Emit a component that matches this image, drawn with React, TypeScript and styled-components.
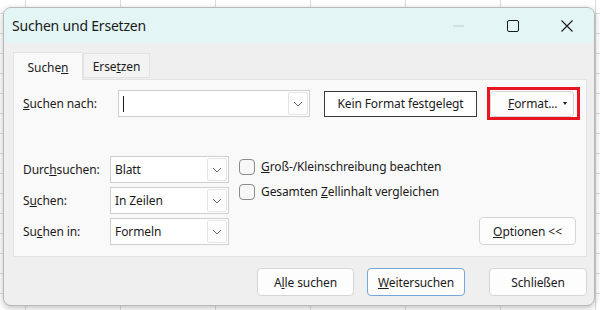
import styled, { createGlobalStyle } from 'styled-components';

const GlobalStyle = createGlobalStyle`
    html, body {
        margin: 0;
        padding: 0;
        width: 600px;
        height: 310px;
        overflow: hidden;
    }
    body {
        font-family: 'Noto Sans', 'Open Sans', sans-serif;
        color: #1b1b1b;
        background-color: #ffffff;
        background-image:
            linear-gradient(to right, #dcdcdc 1px, transparent 1px),
            linear-gradient(to bottom, #dcdcdc 1px, transparent 1px);
        background-size: 95px 100%, 100% 20px;
        background-position: 25px 0, 0 13px;
    }
`;

const Sheet = styled.div`
    width: 600px;
    height: 310px;
    padding: 7px 5px 4px 3px;
    box-sizing: border-box;
`;

const Dialog = styled.div`
    display: flex;
    flex-direction: column;
    width: 100%;
    height: 100%;
    box-sizing: border-box;
    background: #efefef;
    border: 1px solid #b9b9b9;
    border-radius: 8px;
    box-shadow: 0 2px 6px rgba(0, 0, 0, 0.25);
    overflow: hidden;
`;

const TitleBar = styled.div`
    display: flex;
    align-items: center;
    height: 35px;
    flex: none;
    background: #e3f6f5;
    padding-left: 8px;
`;

const Title = styled.div`
    flex: 1;
    font-size: 14px;
    letter-spacing: -0.2px;
    color: #1a1a1a;
`;

const WinButton = styled.div<{ $w: number }>`
    display: flex;
    align-items: center;
    justify-content: center;
    width: ${(p) => p.$w}px;
    height: 35px;
`;

const Body = styled.div`
    display: flex;
    flex-direction: column;
    flex: 1;
    padding: 9px 7px 0 9px;
    font-size: 12px;
    letter-spacing: -0.1px;
`;

const TabStrip = styled.div`
    display: flex;
    align-items: flex-end;
    height: 27px;
    position: relative;
    z-index: 1;
`;

const Tab = styled.div<{ $active?: boolean }>`
    display: flex;
    align-items: center;
    justify-content: center;
    box-sizing: border-box;
    width: ${(p) => (p.$active ? 70 : 67)}px;
    height: ${(p) => (p.$active ? 28 : 25)}px;
    margin-bottom: ${(p) => (p.$active ? -1 : 1)}px;
    background: ${(p) => (p.$active ? '#f9f9f9' : '#f3f3f3')};
    border: 1px solid #e3e3e3;
    border-bottom: ${(p) => (p.$active ? 'none' : '1px solid #e3e3e3')};
    padding-top: ${(p) => (p.$active ? 2 : 1)}px;
`;

const Panel = styled.div`
    display: flex;
    flex-direction: column;
    height: 178px;
    box-sizing: border-box;
    background: #f9f9f9;
    border: 1px solid #e3e3e3;
    padding: 10px 5px 0 9px;
`;

const TopRow = styled.div`
    display: flex;
    align-items: center;
    height: 27px;
`;

const Label = styled.div<{ $w: number }>`
    width: ${(p) => p.$w}px;
    flex: none;
`;

const Combo = styled.div<{ $w: number }>`
    display: flex;
    align-items: center;
    box-sizing: border-box;
    width: ${(p) => p.$w}px;
    height: 27px;
    background: #ffffff;
    border: 1px solid #cfcfcf;
    flex: none;
`;

const ComboText = styled.div`
    flex: 1;
    padding-left: 4px;
    display: flex;
    align-items: center;
`;

const Caret = styled.div`
    width: 1px;
    height: 16px;
    background: #1a1a1a;
`;

const ComboButton = styled.div`
    display: flex;
    align-items: center;
    justify-content: center;
    width: 20px;
    height: 23px;
    margin-right: 1px;
    box-sizing: border-box;
    border: 1px solid #e4e4e4;
    border-radius: 2px;
    background: #fdfdfd;
`;

const FormatBox = styled.div`
    display: flex;
    align-items: center;
    justify-content: center;
    box-sizing: border-box;
    width: 153px;
    height: 26px;
    margin-left: 14px;
    border: 1px solid #3a3a3a;
    background: #ffffff;
`;

const Highlight = styled.div`
    box-sizing: border-box;
    width: 93px;
    height: 33px;
    margin-left: 10px;
    border: 3px solid #e8141f;
    display: flex;
    align-items: center;
`;

const Button = styled.div<{ $w: number; $h?: number; $primary?: boolean }>`
    display: flex;
    align-items: center;
    justify-content: center;
    box-sizing: border-box;
    width: ${(p) => p.$w}px;
    height: ${(p) => p.$h ?? 28}px;
    flex: none;
    background: #fdfdfd;
    border: 1px solid ${(p) => (p.$primary ? '#72a9da' : '#d5d5d5')};
    border-radius: 4px;
    color: #1b1b1b;
`;

const SplitButton = styled(Button)`
    justify-content: space-between;
    padding: 0 6px 0 17px;
`;

const Arrow = styled.span`
    width: 0;
    height: 0;
    border-left: 2.5px solid transparent;
    border-right: 2.5px solid transparent;
    border-top: 3px solid #1a1a1a;
`;

const Options = styled.div`
    display: flex;
    margin-top: 39px;
`;

const SelectCol = styled.div`
    display: flex;
    flex-direction: column;
    gap: 4px;
`;

const SelectRow = styled.div`
    display: flex;
    align-items: center;
`;

const CheckCol = styled.div`
    display: flex;
    flex-direction: column;
    gap: 8px;
    margin-left: 10px;
    padding-top: 2px;
`;

const CheckRow = styled.div`
    display: flex;
    align-items: center;
    gap: 6px;
`;

const Box = styled.div`
    width: 16px;
    height: 16px;
    box-sizing: border-box;
    border: 1px solid #8a8a8a;
    border-radius: 4px;
    background: #f7f7f7;
`;

const RightCol = styled.div`
    flex: 1;
    display: flex;
    align-items: flex-end;
    justify-content: flex-end;
    padding-right: 5px;
`;

const Footer = styled.div`
    display: flex;
    justify-content: flex-end;
    gap: 13px;
    padding: 11px 0 0;
`;

const CloseButton = styled(Button)`
    margin-left: 11px;
`;

const Chevron = () => (
    <svg width="10" height="6" viewBox="0 0 10 6">
        <path d="M1 1 L5 5 L9 1" fill="none" stroke="#6a6a6a" strokeWidth="1" />
    </svg>
);

const selects = [
    { label: <>Durc<u>h</u>suchen:</>, value: 'Blatt' },
    { label: <>S<u>u</u>chen:</>, value: 'In Zeilen' },
    { label: <>Su<u>c</u>hen in:</>, value: 'Formeln' },
];

export default function App() {
    return (
        <Sheet>
            <GlobalStyle />
            <Dialog>
                <TitleBar>
                    <Title>Suchen und Ersetzen</Title>
                    <WinButton $w={54}>
                        <svg width="12" height="2" viewBox="0 0 12 2">
                            <path d="M0 1 H11" stroke="#c4c9c9" strokeWidth="1" />
                        </svg>
                    </WinButton>
                    <WinButton $w={54}>
                        <svg width="12" height="12" viewBox="0 0 12 12">
                            <rect x="0.5" y="0.5" width="11" height="11" rx="1.5" fill="none" stroke="#1a1a1a" strokeWidth="1" />
                        </svg>
                    </WinButton>
                    <WinButton $w={54}>
                        <svg width="12" height="12" viewBox="0 0 12 12">
                            <path d="M0.5 0.5 L11.5 11.5 M11.5 0.5 L0.5 11.5" stroke="#1a1a1a" strokeWidth="1.1" />
                        </svg>
                    </WinButton>
                </TitleBar>
                <Body>
                    <TabStrip>
                        <Tab $active><span>Suche<u>n</u></span></Tab>
                        <Tab><span>Erse<u>t</u>zen</span></Tab>
                    </TabStrip>
                    <Panel>
                        <TopRow>
                            <Label $w={95}><u>S</u>uchen nach:</Label>
                            <Combo $w={192}>
                                <ComboText><Caret /></ComboText>
                                <ComboButton><Chevron /></ComboButton>
                            </Combo>
                            <FormatBox>Kein Format festgelegt</FormatBox>
                            <Highlight>
                                <SplitButton $w={84} $h={26}>
                                    <span><u>F</u>ormat...</span>
                                    <Arrow />
                                </SplitButton>
                            </Highlight>
                        </TopRow>
                        <Options>
                            <SelectCol>
                                {selects.map((s, i) => (
                                    <SelectRow key={i}>
                                        <Label $w={87}>{s.label}</Label>
                                        <Combo $w={119}>
                                            <ComboText>{s.value}</ComboText>
                                            <ComboButton><Chevron /></ComboButton>
                                        </Combo>
                                    </SelectRow>
                                ))}
                            </SelectCol>
                            <CheckCol>
                                <CheckRow><Box /><span><u>G</u>roß-/Kleinschreibung beachten</span></CheckRow>
                                <CheckRow><Box /><span>Gesamten <u>Z</u>ellinhalt vergleichen</span></CheckRow>
                            </CheckCol>
                            <RightCol>
                                <Button $w={97}><span><u>O</u>ptionen &lt;&lt;</span></Button>
                            </RightCol>
                        </Options>
                    </Panel>
                    <Footer>
                        <Button $w={97}><span>A<u>l</u>le suchen</span></Button>
                        <Button $w={98} $primary><span><u>W</u>eitersuchen</span></Button>
                        <CloseButton $w={98}><span>Schließen</span></CloseButton>
                    </Footer>
                </Body>
            </Dialog>
        </Sheet>
    );
}
